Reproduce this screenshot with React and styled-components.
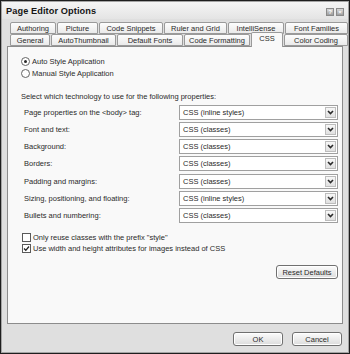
import React from "react";
import styled, { createGlobalStyle } from "styled-components";

const GlobalStyle = createGlobalStyle`
  html, body { margin: 0; padding: 0; background: #dcdcdc; }
  body {
    font-family: "Liberation Sans", Arial, sans-serif;
    font-size: 7.5px;
    color: #2a2a2a;
  }
  * { box-sizing: border-box; }
`;

const Window = styled.div`
  width: 350px;
  height: 354px;
  border: 1px solid #1e1e1e;
  box-shadow: inset 0 0 0 1px #a4a4a4;
  background: #dfdfdf;
  display: flex;
  flex-direction: column;
`;

const TitleBar = styled.div`
  height: 17px;
  flex: 0 0 17px;
  margin: 1px 1px 0 1px;
  padding: 0 4px 0 4px;
  display: flex;
  align-items: center;
  justify-content: space-between;
  background: linear-gradient(#f5f5f5, #e4e4e4);
`;

const Title = styled.div`
  font-size: 9.2px;
  font-weight: bold;
  color: #151515;
  letter-spacing: 0.1px;
`;

const Controls = styled.div`
  display: flex;
  gap: 2px;
  margin-top: 2px;
`;

const CtlButton = styled.div`
  width: 8px;
  height: 8px;
  border: 1px solid #8a8a8a;
  background: linear-gradient(#d8d8d8, #9e9e9e);
  color: #fff;
  font-size: 6px;
  font-weight: bold;
  line-height: 6px;
  text-align: center;
`;

const Content = styled.div`
  flex: 1;
  padding: 3px 6px 0 6px;
  display: flex;
  flex-direction: column;
`;

const TabArea = styled.div`
  padding-left: 3px;
  display: flex;
  flex-direction: column;
`;

const TabRow = styled.div`
  display: flex;
  height: 12px;
  align-items: flex-end;
`;

const Tab = styled.div`
  flex: 0 0 ${(p) => p.$w}px;
  height: ${(p) => (p.$active ? 15 : 12)}px;
  margin-bottom: ${(p) => (p.$active ? -1 : 0)}px;
  position: relative;
  z-index: ${(p) => (p.$active ? 2 : 0)};
  border: 1px solid #9a9a9a;
  border-bottom: ${(p) => (p.$active ? "none" : "1px solid #9a9a9a")};
  border-radius: 2px 2px 0 0;
  margin-right: 1px;
  background: ${(p) =>
    p.$active ? "#f9f9f9" : "linear-gradient(#fdfdfd, #eaeaea)"};
  display: flex;
  justify-content: center;
  align-items: ${(p) => (p.$active ? "flex-start" : "center")};
  padding-top: ${(p) => (p.$active ? 1 : 0)}px;
  white-space: nowrap;
  color: #2a2a2a;
  &:last-child { margin-right: 0; }
`;

const Panel = styled.div`
  height: 278px;
  flex: 0 0 278px;
  border: 1px solid #8c8c8c;
  background: #f9f9f9;
  padding: 8px 4px 0 8px;
  display: flex;
  flex-direction: column;
`;

const OptionLine = styled.label`
  height: 12px;
  display: flex;
  align-items: center;
  gap: 2px;
  padding-left: ${(p) => p.$indent || 0}px;
`;

const Radio = styled.span`
  width: 9px;
  height: 9px;
  border-radius: 50%;
  border: 1px solid #666;
  background: #fff;
  display: flex;
  align-items: center;
  justify-content: center;
  &::after {
    content: "";
    width: 3px;
    height: 3px;
    border-radius: 50%;
    background: ${(p) => (p.$on ? "#2a2a2a" : "transparent")};
  }
`;

const Checkbox = styled.span`
  width: 9px;
  height: 9px;
  border: 1px solid #5a5a5a;
  background: #fff;
  display: flex;
  align-items: center;
  justify-content: center;
`;

const Intro = styled.div`
  margin-top: 12px;
  height: 12px;
  line-height: 12px;
  padding-left: 5px;
`;

const Grid = styled.div`
  margin-top: 1.5px;
  display: grid;
  grid-template-columns: 1fr 159px;
  grid-auto-rows: 15px;
  row-gap: 2.33px;
`;

const Label = styled.div`
  display: flex;
  align-items: center;
  padding-left: 8px;
`;

const Select = styled.div`
  border: 1px solid #a0a0a0;
  background: #fff;
  display: flex;
  align-items: center;
  justify-content: space-between;
  padding: 1px 1px 1px 3px;
`;

const Arrow = styled.span`
  width: 11px;
  height: 11px;
  border: 1px solid #bdbdbd;
  background: linear-gradient(#f7f7f7, #e0e0e0);
  display: flex;
  align-items: center;
  justify-content: center;
`;

const Checks = styled.div`
  margin-top: 9px;
  display: flex;
  flex-direction: column;
`;

const CheckLine = styled.label`
  height: 11px;
  display: flex;
  align-items: center;
  gap: 2px;
  padding-left: 6px;
`;

const ResetRow = styled.div`
  margin-top: 11px;
  display: flex;
  justify-content: flex-end;
`;

const Button = styled.button`
  font: inherit;
  color: #2a2a2a;
  width: ${(p) => p.$w}px;
  height: ${(p) => p.$h || 14}px;
  padding: 0;
  border: 1px solid #707070;
  border-radius: 3px;
  background: linear-gradient(#fcfcfc, #dcdcdc);
  box-shadow: inset 0 0 0 1px #fff;
`;

const Footer = styled.div`
  padding: 8px 1px 0 0;
  display: flex;
  justify-content: flex-end;
  gap: 9px;
`;

const row1 = [
  ["Authoring", 46],
  ["Picture", 41],
  ["Code Snippets", 64],
  ["Ruler and Grid", 63],
  ["IntelliSense", 56],
  ["Font Families", 63],
];
const row2 = [
  ["General", 40],
  ["AutoThumbnail", 65],
  ["Default Fonts", 66],
  ["Code Formatting", 66],
  ["CSS", 32],
  ["Color Coding", 64],
];

const props = [
  ["Page properties on the <body> tag:", "CSS (inline styles)"],
  ["Font and text:", "CSS (classes)"],
  ["Background:", "CSS (classes)"],
  ["Borders:", "CSS (classes)"],
  ["Padding and margins:", "CSS (classes)"],
  ["Sizing, positioning, and floating:", "CSS (inline styles)"],
  ["Bullets and numbering:", "CSS (classes)"],
];

const Chevron = () => (
  <svg width="7" height="5" viewBox="0 0 7 5">
    <polyline points="1,1 3.5,3.5 6,1" fill="none" stroke="#2a2a2a" strokeWidth="1.6" />
  </svg>
);

const Tick = () => (
  <svg width="7" height="7" viewBox="0 0 7 7">
    <polyline points="1,3.5 2.8,5.3 6,1.5" fill="none" stroke="#222" strokeWidth="1.3" />
  </svg>
);

export default function App() {
  return (
    <>
      <GlobalStyle />
      <Window>
        <TitleBar>
          <Title>Page Editor Options</Title>
          <Controls>
            <CtlButton>?</CtlButton>
            <CtlButton>×</CtlButton>
          </Controls>
        </TitleBar>
        <Content>
          <TabArea>
            <TabRow>
              {row1.map(([t, w]) => (
                <Tab key={t} $w={w}>{t}</Tab>
              ))}
            </TabRow>
            <TabRow>
              {row2.map(([t, w]) => (
                <Tab key={t} $w={w} $active={t === "CSS"}>{t}</Tab>
              ))}
            </TabRow>
          </TabArea>
          <Panel>
            <OptionLine $indent={5}>
              <Radio $on />
              Auto Style Application
            </OptionLine>
            <OptionLine $indent={5}>
              <Radio />
              Manual Style Application
            </OptionLine>
            <Intro>Select which technology to use for the following properties:</Intro>
            <Grid>
              {props.map(([l, v], i) => (
                <React.Fragment key={i}>
                  <Label>{l}</Label>
                  <Select>
                    <span>{v}</span>
                    <Arrow><Chevron /></Arrow>
                  </Select>
                </React.Fragment>
              ))}
            </Grid>
            <Checks>
              <CheckLine>
                <Checkbox />
                Only reuse classes with the prefix "style"
              </CheckLine>
              <CheckLine>
                <Checkbox><Tick /></Checkbox>
                Use width and height attributes for images instead of CSS
              </CheckLine>
            </Checks>
            <ResetRow>
              <Button $w={62} $h={14}>Reset Defaults</Button>
            </ResetRow>
          </Panel>
          <Footer>
            <Button $w={50}>OK</Button>
            <Button $w={50}>Cancel</Button>
          </Footer>
        </Content>
      </Window>
    </>
  );
}
